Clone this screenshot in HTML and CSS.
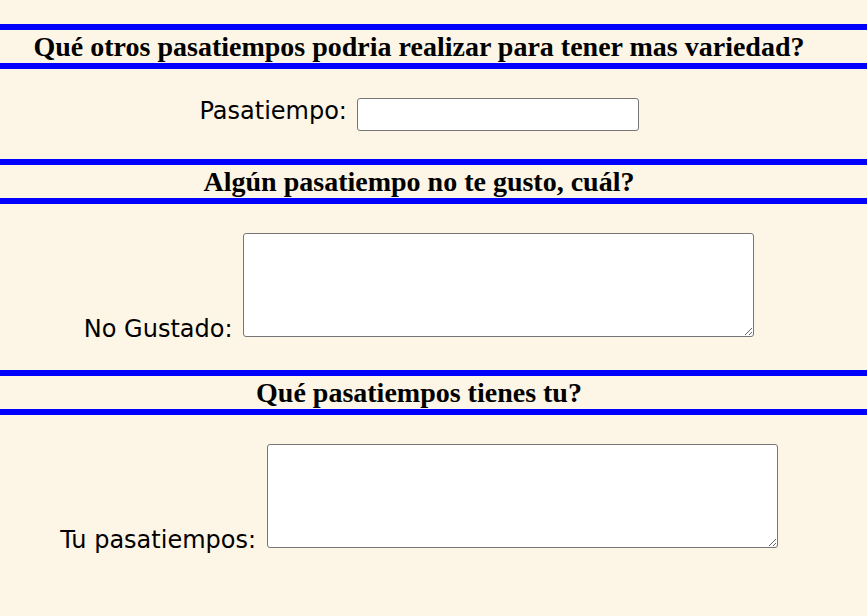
FILE: index.html
```html
<!DOCTYPE html>
<html lang="es">
<head>
<meta charset="utf-8">
<title>Pasatiempos</title>
<link rel="stylesheet" href="styles.css">
</head>
<body>
<form class="form">
  <h2 class="section-title">Qué otros pasatiempos podria realizar para tener mas variedad?</h2>
  <div class="row row-input">
    <label class="label" for="pasatiempo">Pasatiempo:</label>
    <input class="text-input" type="text" id="pasatiempo">
  </div>
  <h2 class="section-title">Algún pasatiempo no te gusto, cuál?</h2>
  <div class="row row-area">
    <label class="label" for="nogustado">No Gustado:</label>
    <textarea class="text-area" id="nogustado"></textarea>
  </div>
  <h2 class="section-title">Qué pasatiempos tienes tu?</h2>
  <div class="row row-area">
    <label class="label" for="tus">Tu pasatiempos:</label>
    <textarea class="text-area" id="tus"></textarea>
  </div>
</form>
</body>
</html>
```
FILE: styles.css
```css
html, body {
  margin: 0;
  padding: 0;
  background: #fdf5e6;
}

.form {
  margin: 0;
  padding-top: 24px;
}

.section-title {
  margin: 0;
  border-top: 6px solid #0000ff;
  border-bottom: 6px solid #0000ff;
  font-family: "Liberation Serif", "Times New Roman", serif;
  font-weight: bold;
  font-size: 28px;
  line-height: 33px;
  text-align: center;
  padding-right: 29px;
  color: #000;
}

.row {
  text-align: center;
  padding-right: 29px;
  font-family: "DejaVu Sans", Verdana, sans-serif;
  font-size: 24px;
  color: #000;
}

.row-input {
  margin: 28px 0 28px;
}

.row-area {
  margin: 29px 0 27px;
}

.label {
  margin-right: 2px;
}

.row-area .label {
  margin-right: 3px;
}

.text-input {
  box-sizing: border-box;
  width: 282px;
  height: 33px;
  border: 1px solid #767676;
  border-radius: 3px;
  background: #fff;
  padding: 1px 2px;
  font-size: 16px;
  vertical-align: baseline;
}

.text-area {
  box-sizing: border-box;
  width: 511px;
  height: 104px;
  border: 1px solid #767676;
  border-radius: 3px;
  background: #fff;
  padding: 2px;
  font-size: 16px;
  vertical-align: baseline;
}
```
